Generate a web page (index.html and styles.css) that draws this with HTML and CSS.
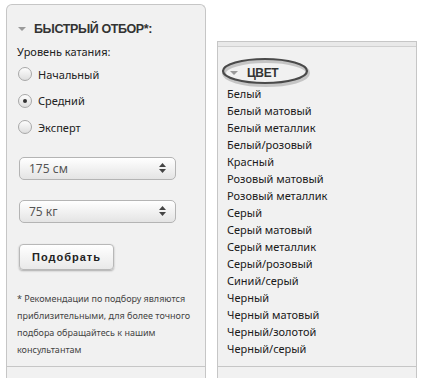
FILE: index.html
```html
<!DOCTYPE html>
<html lang="ru">
<head>
    <meta charset="UTF-8">
    <title>Быстрый отбор</title>
    <link rel="stylesheet" href="styles.css">
</head>
<body>
    <div class="page">
        <aside class="filter">
            <div class="filter-body">
                <h3 class="block-title"><span class="caret"></span>БЫСТРЫЙ ОТБОР*:</h3>
                <div class="field-label">Уровень катания:</div>
                <div class="radios">
                    <label class="radio"><span class="radio-box"></span>Начальный</label>
                    <label class="radio"><span class="radio-box checked"></span>Средний</label>
                    <label class="radio"><span class="radio-box"></span>Эксперт</label>
                </div>

                <div class="selects">
                    <div class="select">175 см
                        <svg class="select-arrows" width="7" height="10" viewBox="0 0 7 10"><path d="M3.5 0 L7 4 L0 4 Z M0 6 L7 6 L3.5 10 Z" fill="#444"/></svg>
                    </div>
                    <div class="select">75 кг
                        <svg class="select-arrows" width="7" height="10" viewBox="0 0 7 10"><path d="M3.5 0 L7 4 L0 4 Z M0 6 L7 6 L3.5 10 Z" fill="#444"/></svg>
                    </div>
                </div>

                <button class="btn">Подобрать</button>

                <p class="note">* Рекомендации по подбору являются приблизительными, для более точного подбора обращайтесь к нашим консультантам</p>
            </div>
            <div class="panel-foot"></div>
        </aside>

        <section class="colors">
            <div class="colors-top"></div>
            <div class="colors-body">
                <div class="title-wrap">
                    <h3 class="block-title"><span class="caret"></span>ЦВЕТ</h3>
                    <!-- highlight drawn over the heading -->
                    <svg class="oval" width="96" height="34" viewBox="0 0 96 34">
                        <ellipse cx="48" cy="18" rx="42" ry="12" fill="none" stroke="rgba(0,0,0,0.18)" stroke-width="4"/>
                        <ellipse cx="47" cy="16" rx="42" ry="12" fill="none" stroke="#4a4a4a" stroke-width="2.2"/>
                    </svg>
                </div>
                <ul class="color-list">
                    <li>Белый</li>
                    <li>Белый матовый</li>
                    <li>Белый металлик</li>
                    <li>Белый/розовый</li>
                    <li>Красный</li>
                    <li>Розовый матовый</li>
                    <li>Розовый металлик</li>
                    <li>Серый</li>
                    <li>Серый матовый</li>
                    <li>Серый металлик</li>
                    <li>Серый/розовый</li>
                    <li>Синий/серый</li>
                    <li>Черный</li>
                    <li>Черный матовый</li>
                    <li>Черный/золотой</li>
                    <li>Черный/серый</li>
                </ul>
            </div>
            <div class="panel-foot"></div>
        </section>
    </div>
</body>
</html>
```

FILE: styles.css
```css
body {
    margin: 0;
    background: #fff;
    font-family: "Noto Sans", "DejaVu Sans", sans-serif;
    color: #222;
    overflow: hidden;
}

.page {
    display: flex;
    align-items: flex-start;
    padding-left: 6px;
}

.filter,
.colors {
    width: 200px;
    box-sizing: border-box;
    background: #f1f1f1;
    border: 1px solid #c6c6c6;
    border-bottom: none;
}

.filter {
    margin-top: 4px;
    border-radius: 6px 6px 0 0;
}

.colors {
    margin-top: 41px;
    margin-left: 11px;
}

.filter-body {
    height: 361px;
    box-sizing: border-box;
    padding: 17px 0 0 10px;
}

.panel-foot {
    height: 20px;
    border-top: 1px solid #c6c6c6;
}

.block-title {
    margin: 0;
    display: flex;
    align-items: center;
    font-family: "Liberation Sans", Arial, sans-serif;
    font-size: 12.5px;
    font-weight: bold;
    color: #333;
    letter-spacing: -0.4px;
}

.caret {
    width: 0;
    height: 0;
    border-left: 4px solid transparent;
    border-right: 4px solid transparent;
    border-top: 4px solid #9a9a9a;
    margin: 0 8px 0 1px;
}

.field-label {
    font-size: 11px;
    margin-top: 9px;
    line-height: 14px;
}

.radios {
    margin-top: 2px;
}

.radio {
    display: flex;
    align-items: center;
    font-size: 11px;
    height: 26.5px;
    margin-left: 1px;
}

.radio-box {
    width: 12px;
    height: 12px;
    border: 1px solid #a8a8a8;
    border-radius: 50%;
    background: linear-gradient(#fdfdfd, #dedede);
    margin-right: 6px;
    position: relative;
}

.radio-box.checked::after {
    content: "";
    position: absolute;
    left: 4px;
    top: 4px;
    width: 4px;
    height: 4px;
    border-radius: 50%;
    background: #333;
}

.selects {
    margin-top: 16px;
    display: flex;
    flex-direction: column;
    gap: 20px;
}

.select {
    width: 157px;
    height: 23px;
    box-sizing: border-box;
    margin-left: 2px;
    padding: 0 9px;
    display: flex;
    align-items: center;
    justify-content: space-between;
    border: 1px solid #b4b4b4;
    border-radius: 5px;
    background: linear-gradient(#ffffff, #e4e4e4);
    font-size: 12px;
    color: #555;
}

.select-arrows {
    display: block;
}

.btn {
    display: block;
    margin: 21px 0 0 2px;
    width: 95px;
    height: 26px;
    border: 1px solid #b8b8b8;
    border-radius: 4px;
    background: linear-gradient(#ffffff, #e9e9e9);
    box-shadow: 0 1px 2px rgba(0, 0, 0, 0.3);
    font-family: "Liberation Sans", Arial, sans-serif;
    font-size: 11px;
    font-weight: bold;
    letter-spacing: 1px;
    color: #222;
    padding: 0;
}

.note {
    margin: 20px 0 0;
    padding-right: 8px;
    font-size: 9px;
    line-height: 17px;
    color: #444;
}

.colors-top {
    height: 4px;
    background: #e9e9e9;
    border-bottom: 1px solid #d0d0d0;
}

.colors-body {
    height: 319px;
    box-sizing: border-box;
    padding: 19px 0 0 9px;
}

.title-wrap {
    position: relative;
    padding-left: 2px;
    height: 16px;
}

.title-wrap .block-title {
    font-size: 12px;
}

.title-wrap .caret {
    margin-right: 9px;
}

.oval {
    position: absolute;
    left: -9px;
    top: -11px;
}

.color-list {
    list-style: none;
    margin: 3px 0 0;
    padding: 0;
    font-size: 11px;
    line-height: 17px;
    color: #1a1a1a;
}
```
